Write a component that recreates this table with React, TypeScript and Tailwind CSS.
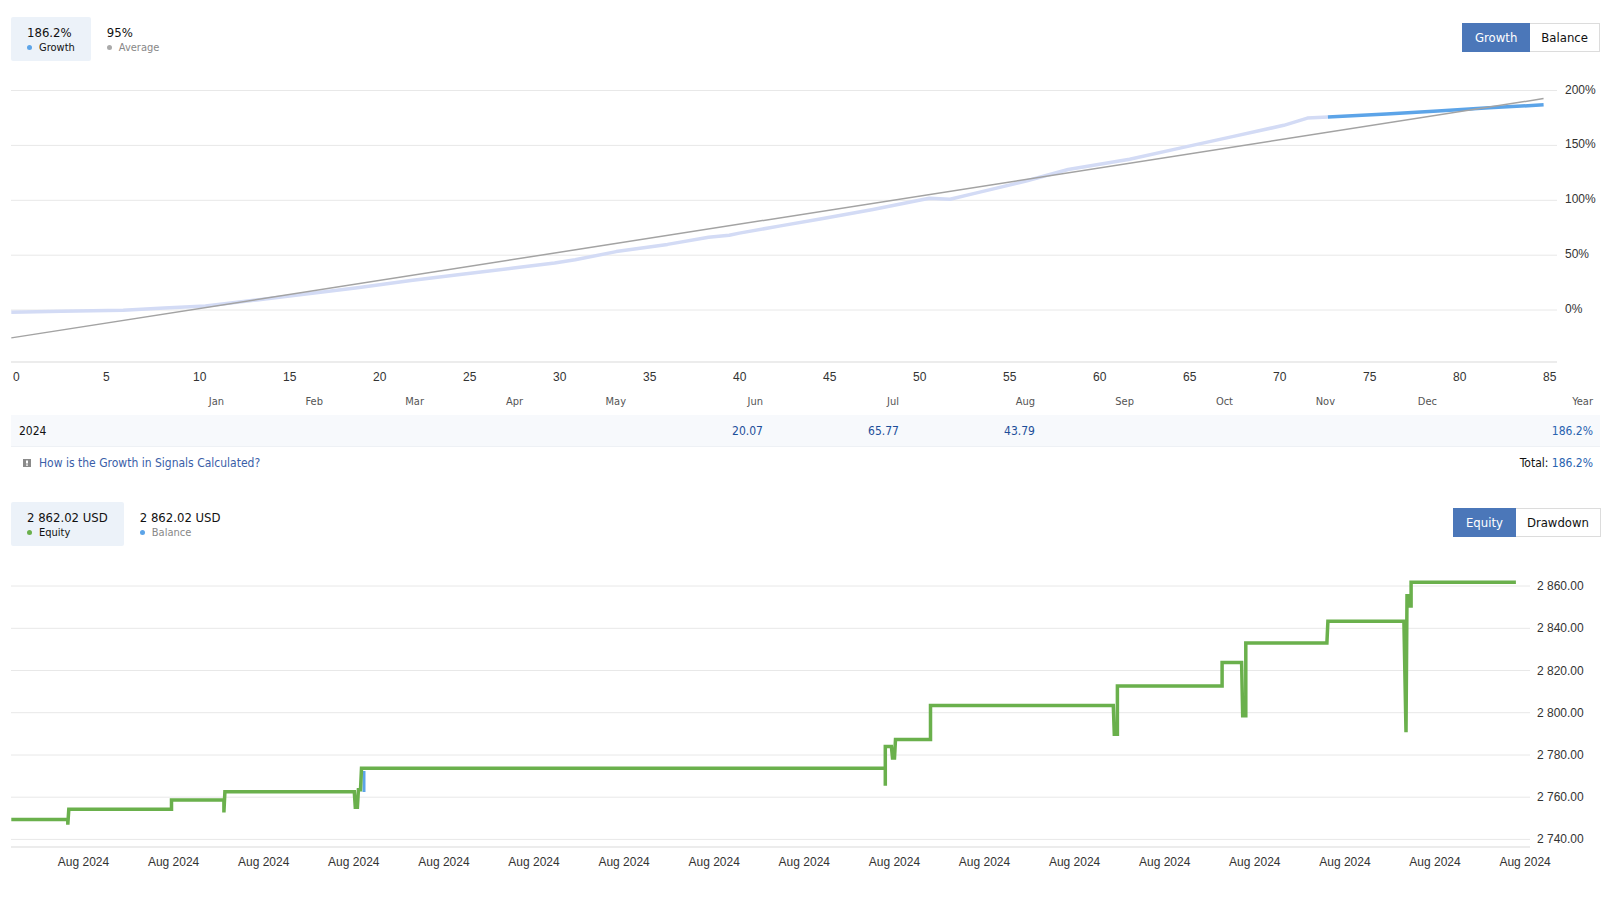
import React from 'react';

const S = 1.027;
const toPts = (a: number[][]) => a.map(([x, y]) => `${(x * S).toFixed(1)},${(y * S).toFixed(1)}`).join(' ');

const growthPts = [
  [11, 304], [60, 303], [120, 302], [160, 300], [200, 298], [250, 292], [300, 286], [350, 280], [400, 273],
  [450, 267], [500, 261], [540, 256], [560, 253], [600, 245], [650, 238], [690, 231], [710, 229], [720, 227],
  [760, 220], [800, 213], [850, 204], [895, 195], [905, 193], [925, 194], [950, 188], [1000, 176], [1040, 165],
  [1100, 155], [1150, 144], [1200, 133], [1250, 122], [1273, 115], [1293, 114],
];
const recentPts = [[1293, 114], [1350, 111], [1400, 108], [1450, 105], [1503, 102]];

const equityPts = [
  [11, 798], [66, 798], [66, 803], [67, 788], [167, 788], [167, 779], [218, 779], [218, 791], [219, 771],
  [345, 771], [346, 786], [348, 786], [349, 769], [351, 769], [352, 748], [862, 748], [862, 765], [862, 727],
  [868, 727], [869, 738], [871, 738], [872, 720], [906, 720], [906, 687], [1084, 687], [1085, 715], [1088, 715],
  [1088, 668], [1190, 668], [1190, 645], [1209, 645], [1210, 697], [1213, 697], [1213, 626], [1292, 626],
  [1293, 605], [1367, 605], [1369, 713], [1370, 580], [1372, 580], [1372, 590], [1374, 590], [1374, 567],
  [1476, 567],
];

const pctLines = [
  { y: 90.5, label: '200%' },
  { y: 145.4, label: '150%' },
  { y: 200.3, label: '100%' },
  { y: 255.2, label: '50%' },
  { y: 310, label: '0%' },
];

const usdLines = [
  { y: 586, label: '2 860.00' },
  { y: 628.3, label: '2 840.00' },
  { y: 670.5, label: '2 820.00' },
  { y: 712.7, label: '2 800.00' },
  { y: 755, label: '2 780.00' },
  { y: 797.2, label: '2 760.00' },
  { y: 839.4, label: '2 740.00' },
];

const ticks = Array.from({ length: 18 }, (_, i) => i * 5);

const months: Array<{ name: string; value?: string }> = [
  { name: 'Jan' },
  { name: 'Feb' },
  { name: 'Mar' },
  { name: 'Apr' },
  { name: 'May' },
  { name: 'Jun', value: '20.07' },
  { name: 'Jul', value: '65.77' },
  { name: 'Aug', value: '43.79' },
  { name: 'Sep' },
  { name: 'Oct' },
  { name: 'Nov' },
  { name: 'Dec' },
];

// column widths follow the table in the screenshot: months with data get wider cells
const gridCols = 'grid grid-cols-[113px_100px_99px_101px_99px_103px_137px_136px_136px_99px_99px_102px_102px_1fr]';
const ui = "font-['DejaVu_Sans_Condensed','Liberation_Sans',sans-serif]";

function LegendItem({ value, label, dot, active }: { value: string; label: string; dot: string; active?: boolean }) {
  return (
    <div className={`px-4 pt-[8px] pb-[7px] rounded-[2px] ${active ? 'bg-[#ecf2f9]' : ''}`}>
      <div className="text-[13px] leading-[16px] text-[#111]">{value}</div>
      <div className="flex items-center gap-[7px] text-[11px] leading-[13px]">
        <span className="w-[5px] h-[5px] rounded-full" style={{ backgroundColor: dot }} />
        <span className={active ? 'text-[#111]' : 'text-[#888]'}>{label}</span>
      </div>
    </div>
  );
}

function Toggle({ left, right }: { left: string; right: string }) {
  return (
    <div className="flex mt-[6px] text-[13px] leading-[27px]">
      <button className="px-[12px] bg-[#4b77b9] text-white border border-[#4b77b9]">{left}</button>
      <button className="px-[11px] bg-white text-[#111] border border-[#dcdcdc] border-l-0">{right}</button>
    </div>
  );
}

function GrowthChart() {
  return (
    <svg width="1609" height="328" viewBox="0 61 1609 328" className="block font-['Liberation_Sans',sans-serif]">
      {pctLines.map(l => (
        <g key={l.label}>
          <line x1="11" x2="1557" y1={l.y} y2={l.y} stroke="#e8e8e8" strokeWidth="1" />
          <text x="1565" y={l.y + 3} fontSize="12" fill="#333">{l.label}</text>
        </g>
      ))}
      <line x1="11" x2="1557" y1="362" y2="362" stroke="#e6e6e6" strokeWidth="1.5" />
      {ticks.map(t => (
        <text key={t} x={13 + 18 * t} y="381" fontSize="12" fill="#333">{t}</text>
      ))}
      <polyline points={toPts(growthPts)} fill="none" stroke="#d3dbf5" strokeWidth="3.5" strokeLinejoin="round" />
      <polyline points={toPts(recentPts)} fill="none" stroke="#5ca4e8" strokeWidth="3.5" strokeLinejoin="round" />
      <line x1={11 * S} y1={329 * S} x2={1503 * S} y2={96 * S} stroke="#a3a3a3" strokeWidth="1.5" />
    </svg>
  );
}

function EquityChart() {
  return (
    <svg width="1609" height="334" viewBox="0 546 1609 334" className="block font-['Liberation_Sans',sans-serif]">
      {usdLines.map(l => (
        <g key={l.label}>
          <line x1="11" x2="1530" y1={l.y} y2={l.y} stroke="#e8e8e8" strokeWidth="1" />
          <text x="1537" y={l.y + 4} fontSize="12" fill="#333">{l.label}</text>
        </g>
      ))}
      <line x1="11" x2="1530" y1="847" y2="847" stroke="#e6e6e6" strokeWidth="1.5" />
      {Array.from({ length: 17 }, (_, i) => (
        <text key={i} x={83.5 + 90.1 * i} y="866" fontSize="12" fill="#333" textAnchor="middle">Aug 2024</text>
      ))}
      <line x1="364" x2="364" y1="771" y2="792" stroke="#5ca4e8" strokeWidth="3" />
      <polyline points={toPts(equityPts)} fill="none" stroke="#6ab04c" strokeWidth="3.5" strokeLinejoin="miter" />
    </svg>
  );
}

export default function App() {
  return (
    <div className={`w-[1609px] bg-white pt-[17px] ${ui}`}>
      <div className="flex justify-between items-start pl-[11px] pr-[9px]">
        <div className="flex">
          <LegendItem value="186.2%" label="Growth" dot="#5ca4e8" active />
          <LegendItem value="95%" label="Average" dot="#aaaaaa" />
        </div>
        <Toggle left="Growth" right="Balance" />
      </div>

      <GrowthChart />

      <div className="pl-[11px] pr-[9px]">
        <div className={`${gridCols} h-[26px] items-center text-[11px] text-[#555]`}>
          <div />
          {months.map(m => (
            <div key={m.name} className="text-right">{m.name}</div>
          ))}
          <div className="text-right pr-[7px]">Year</div>
        </div>
        <div className={`${gridCols} h-[32px] items-center text-[12px] bg-[#f7f9fc] border-b border-[#eef1f5]`}>
          <div className="pl-[8px] text-[#111]">2024</div>
          {months.map(m => (
            <div key={m.name} className="text-right text-[#1d4f9a]">{m.value ?? ''}</div>
          ))}
          <div className="text-right pr-[7px] text-[#2a63b0]">186.2%</div>
        </div>
        <div className="flex justify-between items-center h-[32px] text-[12px]">
          <div className="flex items-center gap-[8px] pl-[12px]">
            <svg width="8" height="8" viewBox="0 0 8 8">
              <rect width="8" height="8" fill="#8a8a8a" />
              <rect x="3" y="1.5" width="2" height="3" fill="#fff" />
              <rect x="3" y="5.5" width="2" height="1.2" fill="#fff" />
            </svg>
            <span className="text-[#3a5ea8]">How is the Growth in Signals Calculated?</span>
          </div>
          <div className="pr-[7px]">
            <span className="text-[#111]">Total: </span>
            <span className="text-[#2a63b0]">186.2%</span>
          </div>
        </div>
      </div>

      <div className="flex justify-between items-start pl-[11px] pr-[8px] mt-[23px]">
        <div className="flex">
          <LegendItem value="2 862.02 USD" label="Equity" dot="#6ab04c" active />
          <LegendItem value="2 862.02 USD" label="Balance" dot="#5ca4e8" />
        </div>
        <Toggle left="Equity" right="Drawdown" />
      </div>

      <EquityChart />
    </div>
  );
}
